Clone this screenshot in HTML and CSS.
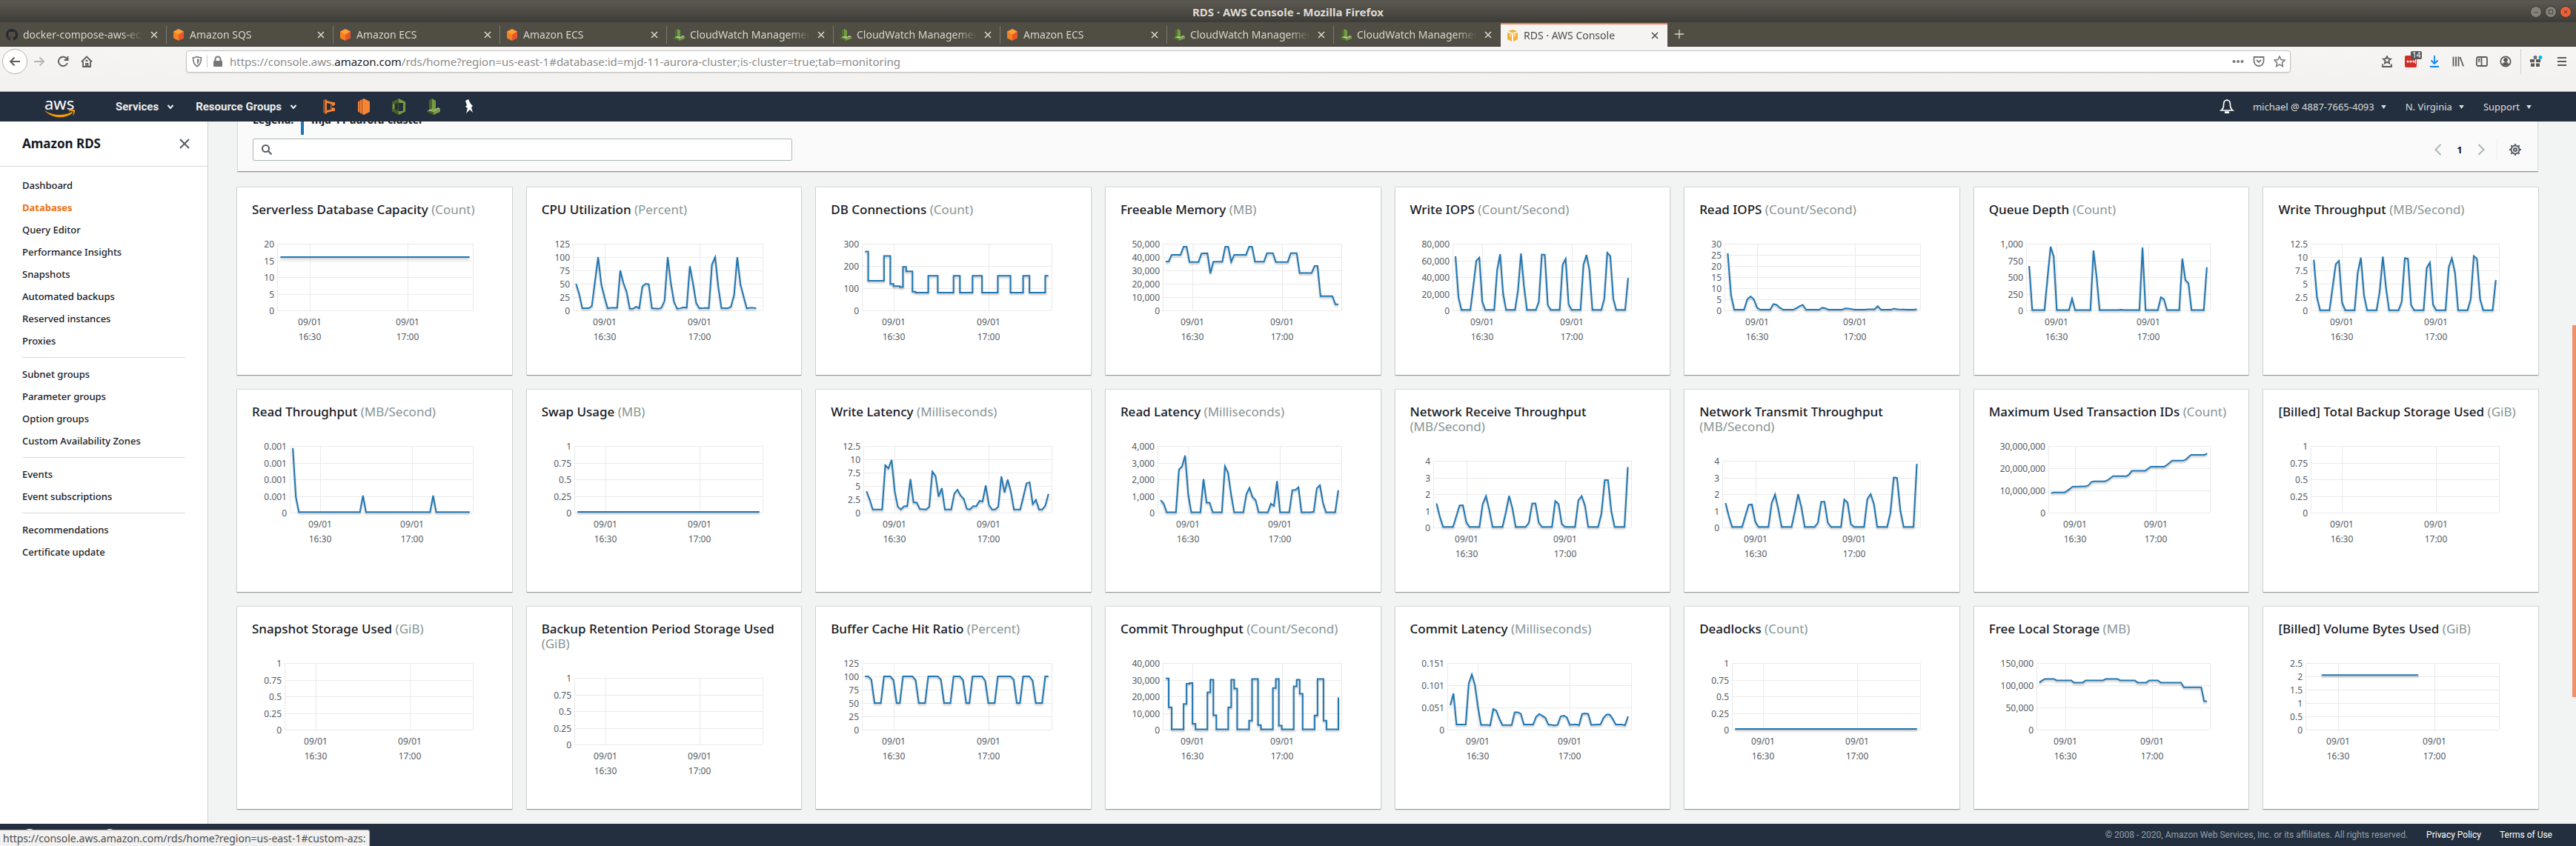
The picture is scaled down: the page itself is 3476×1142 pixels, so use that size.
FILE: index.html
```html
<!DOCTYPE html>
<html lang="en">
<head>
<meta charset="utf-8">
<title>RDS · AWS Console</title>
<link rel="stylesheet" href="styles.css">
</head>
<body>

<svg class="sprite" aria-hidden="true">
  <symbol id="i-close" viewBox="0 0 12 12"><path d="M2 2l8 8M10 2l-8 8" fill="none" stroke="currentColor" stroke-width="1.6"/></symbol>
  <symbol id="i-github" viewBox="0 0 16 16"><path fill="#24292e" fill-rule="evenodd" d="M8 0C3.58 0 0 3.58 0 8c0 3.54 2.29 6.53 5.47 7.59.4.07.55-.17.55-.38 0-.19-.01-.82-.01-1.49-2.01.37-2.53-.49-2.69-.94-.09-.23-.48-.94-.82-1.13-.28-.15-.68-.52-.01-.53.63-.01 1.08.58 1.23.82.72 1.21 1.87.87 2.33.66.07-.52.28-.87.51-1.07-1.78-.2-3.64-.89-3.64-3.95 0-.87.31-1.59.82-2.15-.08-.2-.36-1.02.08-2.12 0 0 .67-.21 2.2.82a7.6 7.6 0 014 0c1.53-1.04 2.2-.82 2.2-.82.44 1.1.16 1.92.08 2.12.51.56.82 1.27.82 2.15 0 3.07-1.87 3.75-3.65 3.95.29.25.54.73.54 1.48 0 1.07-.01 1.93-.01 2.2 0 .21.15.46.55.38A8.01 8.01 0 0016 8c0-4.42-3.58-8-8-8z"/></symbol>
  <symbol id="i-cube" viewBox="0 0 16 16"><path fill="#f58220" d="M1 3.500l7 2V16l-7-3.500z"/><path fill="#e8562a" d="M15 3.500l-7 2V16l7-3.500z"/><path fill="#ffa033" d="M8 0l7 3.500-7 4-7-4z"/></symbol>
  <symbol id="i-watch" viewBox="0 0 16 16"><path fill="#4c722c" d="M3 2l3-2v12l-3 1z"/><path fill="#759c3e" d="M6 0l4 2v9l-4 1z"/><path fill="#4c722c" d="M0 11l8 2v3l-8-3z"/><path fill="#759c3e" d="M8 13l8-3v3l-8 3z"/><path fill="#b7ca9d" d="M2 11l5-1L10 11l3-2 3 1-8 3z"/></symbol>
  <symbol id="i-rds" viewBox="0 0 16 16"><path fill="#f2b134" d="M1 4l6 2v10l-6-3zM15 4L9 6v10l6-3zM2 2l6-2 6 2-6 2.500z"/><path fill="#fbe5b5" d="M1 3l7 2 7-2v1l-7 2-7-2zM4 6l2 .5v3L4 9zM10 6.500L12 6v3l-2 .5z"/></symbol>
  <symbol id="i-caret" viewBox="0 0 10 8"><path d="M1.500 2L5 6l3.500-4" fill="none" stroke="currentColor" stroke-width="2"/></symbol>
  <symbol id="i-tri" viewBox="0 0 8 6"><path d="M0 0h8L4 6z" fill="currentColor"/></symbol>
</svg>

<header class="titlebar">
  <h1 class="titlebar-text">RDS · AWS Console - Mozilla Firefox</h1>
  <div class="window-controls">
    <button class="win-btn" aria-label="Minimize"><svg viewBox="0 0 16 16"><path d="M5 8.500h6"/></svg></button>
    <button class="win-btn" aria-label="Maximize"><svg viewBox="0 0 16 16"><path d="M5 5h6v6H5z"/></svg></button>
    <button class="win-btn win-close" aria-label="Close"><svg viewBox="0 0 16 16"><path d="M5.500 5.500l5 5M10.500 5.500l-5 5"/></svg></button>
  </div>
</header>

<nav class="tabs" aria-label="Browser tabs">
  <div class="tab"><svg class="fav"><use href="#i-github"/></svg><span class="tab-label">docker-compose-aws-ecs</span><button class="tab-x" aria-label="Close tab"><svg><use href="#i-close"/></svg></button></div>
  <div class="tab"><svg class="fav"><use href="#i-cube"/></svg><span class="tab-label">Amazon SQS</span><button class="tab-x" aria-label="Close tab"><svg><use href="#i-close"/></svg></button></div>
  <div class="tab"><svg class="fav"><use href="#i-cube"/></svg><span class="tab-label">Amazon ECS</span><button class="tab-x" aria-label="Close tab"><svg><use href="#i-close"/></svg></button></div>
  <div class="tab"><svg class="fav"><use href="#i-cube"/></svg><span class="tab-label">Amazon ECS</span><button class="tab-x" aria-label="Close tab"><svg><use href="#i-close"/></svg></button></div>
  <div class="tab"><svg class="fav"><use href="#i-watch"/></svg><span class="tab-label">CloudWatch Management</span><button class="tab-x" aria-label="Close tab"><svg><use href="#i-close"/></svg></button></div>
  <div class="tab"><svg class="fav"><use href="#i-watch"/></svg><span class="tab-label">CloudWatch Management</span><button class="tab-x" aria-label="Close tab"><svg><use href="#i-close"/></svg></button></div>
  <div class="tab"><svg class="fav"><use href="#i-cube"/></svg><span class="tab-label">Amazon ECS</span><button class="tab-x" aria-label="Close tab"><svg><use href="#i-close"/></svg></button></div>
  <div class="tab"><svg class="fav"><use href="#i-watch"/></svg><span class="tab-label">CloudWatch Management</span><button class="tab-x" aria-label="Close tab"><svg><use href="#i-close"/></svg></button></div>
  <div class="tab tab-last"><svg class="fav"><use href="#i-watch"/></svg><span class="tab-label">CloudWatch Management</span><button class="tab-x" aria-label="Close tab"><svg><use href="#i-close"/></svg></button></div>
  <div class="tab tab-active"><svg class="fav"><use href="#i-rds"/></svg><span class="tab-label">RDS · AWS Console</span><button class="tab-x" aria-label="Close tab"><svg><use href="#i-close"/></svg></button></div>
  <button class="tab-new" aria-label="New tab"><svg viewBox="0 0 16 16"><path d="M8 1v14M1 8h14" fill="none" stroke="currentColor" stroke-width="1.500"/></svg></button>
</nav>

<div class="toolbar">
  <div class="nav-buttons">
    <button class="tb back" aria-label="Back"><svg viewBox="0 0 16 16"><path d="M15 8H2M7.500 2.500L2 8l5.500 5.500"/></svg></button>
    <button class="tb fwd" aria-label="Forward"><svg viewBox="0 0 16 16"><path d="M1 8h13M8.500 2.500L14 8l-5.500 5.500"/></svg></button>
    <button class="tb" aria-label="Reload"><svg viewBox="0 0 16 16"><path d="M14 10a6.200 6.200 0 1 1-1.500-6.500L14 5M14.500 1v5h-5"/></svg></button>
    <button class="tb" aria-label="Home"><svg viewBox="0 0 16 16"><path d="M1 8.500L8 1.500l7 7M3 8v7h10V8M7 15v-4h2.500v4M6.500 7h3"/></svg></button>
  </div>
  <div class="urlbar">
    <svg class="u-shield" viewBox="0 0 16 16"><path d="M8 1.500c2 1 4 1.300 5.500 1.300 0 6-1 9.500-5.500 12C3.500 12.300 2.500 8.800 2.500 2.800 4 2.800 6 2.500 8 1.500z" fill="none" stroke="#777" stroke-width="1.600"/><path d="M8 4.500v7.500c2-1.600 2.700-4 2.800-7z" fill="#777"/></svg>
    <svg class="u-lock" viewBox="0 0 16 16"><path d="M4.500 7V5a3.500 3.500 0 0 1 7 0v2" fill="none" stroke="#777" stroke-width="2"/><rect x="2" y="7" width="12" height="8" rx="1" fill="#777"/></svg>
    <div class="url" role="textbox" aria-label="Address">https://console.aws.<b>amazon.com</b>/rds/home?region=us-east-1#database:id=mjd-11-aurora-cluster;is-cluster=true;tab=monitoring</div>
    <button class="ub" aria-label="Page actions"><svg viewBox="0 0 16 16"><g fill="#777"><circle cx="2.500" cy="8" r="2"/><circle cx="8" cy="8" r="2"/><circle cx="13.500" cy="8" r="2"/></g></svg></button>
    <button class="ub" aria-label="Save to Pocket"><svg viewBox="0 0 16 16"><path d="M1.500 2h13v5.500a6.500 6.500 0 0 1-13 0zM5 6l3 3 3-3" fill="none" stroke="#777" stroke-width="1.800"/></svg></button>
    <button class="ub" aria-label="Bookmark this page"><svg viewBox="0 0 16 16"><path d="M8 1l2.100 4.600 4.900.6-3.600 3.400.9 4.900L8 12.100l-4.300 2.400.9-4.900L1 6.200l4.900-.6z" fill="none" stroke="#777" stroke-width="1.500"/></svg></button>
  </div>
  <div class="tools">
    <button class="tb" aria-label="Bookmarks"><svg viewBox="0 0 16 16"><path d="M8 1l1.500 3.200 3.500.4-2.600 2.400.7 3.500L8 8.800l-3.100 1.700.7-3.500L3 4.600l3.500-.4zM2 11.500V15h12v-3.500"/></svg></button>
    <button class="tb pass" aria-label="Password manager"><svg viewBox="0 0 16 16"><rect width="16" height="16" rx="2" fill="#d32d27" stroke="none"/><g fill="#fff" stroke="none"><circle cx="4" cy="8" r="1.500"/><circle cx="8" cy="8" r="1.500"/><circle cx="12" cy="8" r="1.500"/><path d="M14 5h1v6h-1z"/></g></svg><span class="badge">14</span></button>
    <button class="tb dl" aria-label="Downloads"><svg viewBox="0 0 16 16"><path d="M8 0v11M3.500 6.500L8 11l4.500-4.500M2 15h12"/></svg></button>
    <button class="tb" aria-label="Library"><svg viewBox="0 0 16 16"><path d="M1.500 1.500v13M5 1.500v13M8.500 1.500v13M10.500 2l4.500 12.500"/></svg></button>
    <button class="tb" aria-label="Sidebar"><svg viewBox="0 0 16 16"><rect x="1" y="2" width="14" height="12" rx="2"/><path d="M7.500 2v12M3 5h2.500M3 7.500h2.500"/></svg></button>
    <button class="tb" aria-label="Account"><svg viewBox="0 0 16 16"><circle cx="8" cy="8" r="6.700"/><circle cx="8" cy="6" r="2" fill="currentColor"/><path d="M4.500 11.500c1-2 6-2 7 0-1.500 2-5.500 2-7 0z" fill="currentColor"/></svg></button>
    <button class="tb gift" aria-label="What's new"><svg viewBox="0 0 18 16"><path d="M1 5h6v4H1zM9 5h6v4H9zM2 10.500h5V15H2zM9 10.500h5V15H9z" fill="currentColor" stroke="none"/><circle cx="8" cy="2.500" r="1.500"/><circle cx="15" cy="2.500" r="2.500" fill="#00b3f4" stroke="none"/></svg></button>
    <button class="tb" aria-label="Menu"><svg viewBox="0 0 16 16"><path d="M2 3h12M2 8h12M2 13h12"/></svg></button>
  </div>
</div>

<div class="awsnav">
  <a class="aws-logo" href="#home" aria-label="AWS home"><span class="aws-word">aws</span><svg viewBox="0 0 42 12"><path d="M0 1c11 7.500 26 8 37 2l1 1.500C28 13 10 12.500 0 1z" fill="#f90"/><path d="M33 1.200c3-1.600 7-1.500 7.800-.6.800 1-.3 5.500-2.800 8 .6-2.200 1.600-5 .9-5.900-.7-.9-3.500-.7-5.900-.3z" fill="#f90"/></svg></a>
  <button class="menu">Services<svg><use href="#i-caret"/></svg></button>
  <button class="menu">Resource Groups<svg><use href="#i-caret"/></svg></button>
  <div class="shortcuts">
    <a href="#ecr" aria-label="Container Registry"><svg viewBox="0 0 24 24"><path fill="#9d5025" d="M4 3l3-1v20l-3-2z"/><path fill="#f58534" d="M7 2l2 1v18l-2 1zM9 4l10 2.500v4L15 11v2l4 .5v4L9 20v-3l5-1v-8L9 7z"/><path fill="#9d5025" d="M14 8l2 .5V11l-2 1zM14 13l2 1v1.500l-2 .5z"/><path fill="#f58534" d="M17 6h3v4h-3zM17 14h3v4h-3z"/></svg></a>
    <a href="#ec2" aria-label="EC2"><svg viewBox="0 0 24 24"><path fill="#9d5025" d="M4 5l8-4v22l-8-4z"/><path fill="#f58534" d="M4 5.500l2-1v15l-2-1zM7 3.500l2-1v19l-2-1zM10 2l2-1 8 4v14l-8 4-2-1z"/></svg></a>
    <a href="#vpc" aria-label="VPC"><svg viewBox="0 0 24 24"><path fill="#4b612c" d="M12 1L3 5.500v13L12 23z"/><path fill="#759c3e" d="M12 1l9 4.500v13L12 23v-5h5l1-1V7h-5l-1-1z"/><path fill="#232f3e" d="M7 8l4-1v10l-4-1zM13 7l4 1v8l-4 1z"/><path fill="#759c3e" d="M4 9l2-1v8l-2-1z"/></svg></a>
    <a href="#cloudwatch" aria-label="CloudWatch"><svg viewBox="0 0 24 24"><path fill="#4b612c" d="M6 3l4-2v16l-4 1z"/><path fill="#759c3e" d="M10 1l5 3v12l-5 1z"/><path fill="#4b612c" d="M3 17l9 2v4l-9-4z"/><path fill="#759c3e" d="M12 19l9-4v4l-9 4z"/><path fill="#b7ca9d" d="M4 17l6-2 4 1 4-3 3 2-9 4z"/><path fill="#759c3e" d="M7 16.500l4-1 3 1.300 3.500-2 2 .8L12 18z"/></svg></a>
    <button aria-label="Pin shortcuts"><svg viewBox="0 0 24 24"><path fill="#fff" d="M8 4l4-2 3 6 3 3-2 2 2 7-4-4-5 5 2-7-3-2 2-2z"/></svg></button>
  </div>
  <div class="account">
    <button class="bell" aria-label="Notifications"><svg viewBox="0 0 20 20"><path d="M10 2c-3 0-4 2.500-4 5 0 4-1 6-3 7.500h14C15 13 14 11 14 7c0-2.500-1-5-4-5zM8 16.500h4v1H8zM10 2V1" fill="none" stroke="#fff" stroke-width="1.500"/></svg></button>
    <button class="acct">michael @ 4887-7665-4093<svg><use href="#i-tri"/></svg></button>
    <button class="acct">N. Virginia<svg><use href="#i-tri"/></svg></button>
    <button class="acct">Support<svg><use href="#i-tri"/></svg></button>
  </div>
</div>

<div class="page">
  <aside class="side">
    <div class="side-head"><h2>Amazon RDS</h2><button aria-label="Close navigation"><svg viewBox="0 0 14 14"><path d="M1 1l12 12M13 1L1 13" fill="none" stroke="#545b64" stroke-width="2"/></svg></button></div>
    <nav class="side-nav" aria-label="RDS">
      <ul><li><a href="#dashboard">Dashboard</a></li><li><a class="current" href="#databases">Databases</a></li><li><a href="#query">Query Editor</a></li><li><a href="#insights">Performance Insights</a></li><li><a href="#snapshots">Snapshots</a></li><li><a href="#backups">Automated backups</a></li><li><a href="#reserved">Reserved instances</a></li><li><a href="#proxies">Proxies</a></li></ul>
      <ul><li><a href="#subnets">Subnet groups</a></li><li><a href="#parameters">Parameter groups</a></li><li><a href="#options">Option groups</a></li><li><a href="#custom-azs">Custom Availability Zones</a></li></ul>
      <ul><li><a href="#events">Events</a></li><li><a href="#subscriptions">Event subscriptions</a></li></ul>
      <ul><li><a href="#recommendations">Recommendations</a></li><li><a href="#certificate">Certificate update</a></li></ul>
    </nav>
  </aside>

  <main class="main">
    <section class="panel">
      <div class="legend"><strong>Legend:</strong><span class="swatch"></span><strong>mjd-11-aurora-cluster</strong></div>
      <div class="panel-row">
        <label class="search"><svg viewBox="0 0 16 16"><circle cx="6.500" cy="6.500" r="4.500"/><path d="M10 10l4.500 4.500"/></svg><input type="text" aria-label="Filter metrics"></label>
        <div class="pager">
          <button aria-label="Previous page"><svg viewBox="0 0 16 16"><path d="M11.500 1l-7 7 7 7"/></svg></button>
          <span class="page-no">1</span>
          <button aria-label="Next page"><svg viewBox="0 0 16 16"><path d="M4.500 1l7 7-7 7"/></svg></button>
          <button class="gear" aria-label="Preferences"><svg viewBox="0 0 16 16"><circle cx="8" cy="8" r="5.500"/><circle cx="8" cy="8" r="2"/><path d="M8 0v2.500M8 13.500V16M0 8h2.500M13.500 8H16M2.300 2.300l1.800 1.800M11.900 11.900l1.800 1.800M13.700 2.300l-1.800 1.800M4.100 11.900l-1.800 1.800"/></svg></button>
        </div>
      </div>
    </section>

    <section class="cards">
      <article class="card"><h3>Serverless Database Capacity <span>(Count)</span></h3><svg class="chart" data-left="34" data-ticks="0 5 10 15 20" data-max="20" data-points="1,16 59,16"></svg></article>
      <article class="card"><h3>CPU Utilization <span>(Percent)</span></h3><svg class="chart" data-left="42" data-ticks="0 25 50 75 100 125" data-max="125" data-points="1,50 2,31 3,4 5,4 6,8 7,54 8,100 9,49 10,25 11,4 12,5 14,5 15,75 16,51 17,35 18,3 19,3 20,7 21,4 22,45 23,50 24,49 25,4 27,3 28,5 29,18 30,100 31,51 32,16 33,3 34,4 35,6 36,5 37,83 38,51 39,14 40,4 41,4 42,5 43,4 44,86 45,100 46,44 47,4 49,4 50,7 51,29 52,100 53,49 54,26 55,4 56,5 57,5 58,4"></svg></article>
      <article class="card"><h3>DB Connections <span>(Count)</span></h3><svg class="chart" data-left="42" data-step data-ticks="0 100 200 300" data-max="300" data-points="1,265 2,133 7,245 9,119 10,109 12,105 13,196 14,176 16,84 17,80 21,156 24,80 29,156 31,80 35,156 38,80 43,156 47,80 51,156 53,80 58,156 59,156"></svg></article>
      <article class="card"><h3>Freeable Memory <span>(MB)</span></h3><svg class="chart" data-left="57" data-ticks="0 10,000 20,000 30,000 40,000 50,000" data-max="50" data-points="1,36.7 2,36.7 3,41.7 6,41.7 7,47.8 8,47.8 9,36.3 12,36.3 13,42.7 15,42.9 16,27.8 17,36.5 20,36.5 21,47.8 22,47.8 23,36.5 24,41.7 28,41.7 29,47.8 30,47.8 31,36.5 34,36.5 35,42.9 37,42.9 38,36.3 42,36.3 43,42.9 45,42.9 46,28 50,28 51,33.3 52,33.3 53,10.7 57,10.7 58,4.6 59,4.6"></svg></article>
      <article class="card"><h3>Write IOPS <span>(Count/Second)</span></h3><svg class="chart" data-left="57" data-ticks="0 20,000 40,000 60,000 80,000" data-max="80" data-points="1,65 2,16 3,.6 6,.6 7,29.5 8,59.7 9,63.5 10,10.5 11,.6 14,.6 15,48.6 16,67.6 17,20 18,.6 21,.6 22,24 23,68.3 24,29.5 25,.6 28,.6 29,10.5 30,67 31,66.7 32,6.7 33,.6 36,.6 37,55 38,62 39,7.3 40,.6 43,.6 44,55 45,66.7 46,48.6 47,.6 50,.6 51,14.3 52,69.2 53,65.4 54,14.3 55,.6 58,.6 59,39"></svg></article>
      <article class="card"><h3>Read IOPS <span>(Count/Second)</span></h3><svg class="chart" data-left="34" data-ticks="0 5 10 15 20 25 30" data-max="30" data-points="1,25.7 2,6.9 3,.3 6,.3 7,5 8,6.3 9,5 10,1.2 11,.3 14,.3 15,2.9 16,2.5 17,1.2 18,.3 21,.3 22,1 23,1.9 24,2.5 25,.3 29,.3 30,1.2 31,.9 32,.3 36,.3 37,.9 38,.8 40,.3 43,.3 44,.5 46,.5 47,1.9 48,.3 51,.3 52,.8 53,.5 55,.4 56,.3 58,.3 59,.5"></svg></article>
      <article class="card"><h3>Queue Depth <span>(Count)</span></h3><svg class="chart" data-left="50" data-ticks="0 250 500 750 1,000" data-max="1000" data-points="1,667 2,5 6,5 7,490 8,956 9,813 10,5 14,5 15,179 16,5 21,5 22,900 23,508 24,5 30,5 31,12 32,5 37,5 38,944 39,5 43,5 44,198 45,167 46,5 50,5 51,778 52,456 53,409 54,5 58,5 59,647"></svg></article>
      <article class="card"><h3>Write Throughput <span>(MB/Second)</span></h3><svg class="chart" data-left="44" data-ticks="0 2.5 5 7.5 10 12.5" data-max="12.5" data-points="1,9.5 2,2.5 3,.05 6,.05 7,4.4 8,8.7 9,9.3 10,1.5 11,.05 14,.05 15,7.1 16,9.9 17,2.8 18,.05 21,.05 22,3.6 23,10.1 24,4.3 25,.05 28,.05 29,1.6 30,9.8 31,9.7 32,1 33,.05 36,.05 37,8 38,9 39,1.1 40,.05 43,.05 44,8.1 45,9.8 46,7.1 47,.05 50,.05 51,2.1 52,10.2 53,9.7 54,2.1 55,.05 58,.05 59,5.7"></svg></article>

      <article class="card"><h3>Read Throughput <span>(MB/Second)</span></h3><svg class="chart" data-left="51" data-ticks="0 0.001 0.001 0.001 0.001" data-max="4" data-points="1,3.88 2,.95 3,.03 23,.03 24,1.02 25,.03 46,.03 47,1.02 48,.03 59,.03"></svg></article>
      <article class="card"><h3>Swap Usage <span>(MB)</span></h3><svg class="chart" data-left="44" data-ticks="0 0.25 0.5 0.75 1" data-max="1" data-points="1,.01 59,.01"></svg></article>
      <article class="card"><h3>Write Latency <span>(Milliseconds)</span></h3><svg class="chart" data-left="44" data-ticks="0 2.5 5 7.5 10 12.5" data-max="12.5" data-points="1,4 2,2.5 3,.6 6,.6 7,8.9 8,8.3 9,9.9 10,4 11,1.1 12,.6 13,1.2 14,1.2 15,6.3 16,1.9 17,1.9 18,.7 20,.6 21,1.1 22,7.7 23,6.9 24,3 25,4.6 26,.6 28,.6 29,3.6 30,4.3 31,3.2 32,2.6 33,.7 34,.6 35,1.2 36,1.2 37,2.2 38,2.1 39,5.1 40,1.5 41,.6 42,.6 43,1.1 44,6.8 45,3.8 46,6.2 47,4 48,.6 50,.6 51,3 52,5.5 53,5.7 54,1.6 55,2.4 56,.6 57,.6 58,1.3 59,3.5"></svg></article>
      <article class="card"><h3>Read Latency <span>(Milliseconds)</span></h3><svg class="chart" data-left="50" data-ticks="0 1,000 2,000 3,000 4,000" data-max="4000" data-points="1,750 2,540 3,20 6,20 7,2590 8,2780 9,3430 10,1110 11,20 14,20 15,2020 16,600 17,600 18,20 21,20 22,2790 23,2410 24,1110 25,20 28,20 29,1110 30,1490 31,940 32,750 33,20 36,20 37,540 38,410 39,1900 40,20 43,20 44,1350 45,1365 46,1520 47,20 50,20 51,60 52,1460 53,1650 54,600 55,20 58,20 59,1350"></svg></article>
      <article class="card"><h3>Network Receive Throughput <span>(MB/Second)</span></h3><svg class="chart" data-left="31" data-ticks="0 1 2 3 4" data-max="4" data-points="1,1.44 2,.65 3,.03 6,.03 7,.68 8,1.32 9,1.33 10,.33 11,.03 14,.03 15,1.41 16,1.89 17,1.05 18,.03 21,.03 22,.9 23,1.9 24,1.16 25,.03 28,.03 29,.28 30,1.44 31,1.44 32,.28 33,.03 36,.03 37,1.59 38,1.41 39,.2 40,.03 43,.03 44,1.63 45,1.89 46,1.33 47,.03 50,.03 51,.84 52,2.84 53,2.84 54,.97 55,.03 58,.03 59,3.63"></svg></article>
      <article class="card"><h3>Network Transmit Throughput <span>(MB/Second)</span></h3><svg class="chart" data-left="31" data-ticks="0 1 2 3 4" data-max="4" data-points="1,1.47 2,.68 3,.03 6,.03 7,.7 8,1.36 9,1.38 10,.35 11,.03 14,.03 15,1.48 16,1.98 17,1.1 18,.03 21,.03 22,.95 23,2 24,1.22 25,.03 28,.03 29,.28 30,1.54 31,1.54 32,.28 33,.03 36,.03 37,1.68 38,1.5 39,.2 40,.03 43,.03 44,1.72 45,2 46,1.4 47,.03 50,.03 51,.9 52,3 53,2.97 54,1.02 55,.03 58,.03 59,3.82"></svg></article>
      <article class="card"><h3>Maximum Used Transaction IDs <span>(Count)</span></h3><svg class="chart" data-left="80" data-ticks="0 10,000,000 20,000,000 30,000,000" data-max="30" data-points="1,8.8 2,9.1 6,9.1 7,9.8 9,11.7 14,11.8 15,12.4 16,13.8 17,14.1 21,14.1 22,14.6 24,16.4 29,16.4 30,17.2 31,18.8 36,18.8 38,20.7 43,20.7 44,21.4 46,23.4 50,23.4 51,23.9 53,26 58,26 59,26.6"></svg></article>
      <article class="card"><h3>[Billed] Total Backup Storage Used <span>(GiB)</span></h3><svg class="chart" data-left="44" data-ticks="0 0.25 0.5 0.75 1" data-max="1" data-points=""></svg></article>

      <article class="card"><h3>Snapshot Storage Used <span>(GiB)</span></h3><svg class="chart" data-left="44" data-ticks="0 0.25 0.5 0.75 1" data-max="1" data-points=""></svg></article>
      <article class="card"><h3>Backup Retention Period Storage Used <span>(GiB)</span></h3><svg class="chart" data-left="44" data-ticks="0 0.25 0.5 0.75 1" data-max="1" data-points=""></svg></article>
      <article class="card"><h3>Buffer Cache Hit Ratio <span>(Percent)</span></h3><svg class="chart" data-left="42" data-ticks="0 25 50 75 100 125" data-max="125" data-points="1,100 2,100 3,94 4,50 6,50 7,100 9,100 10,93 11,50 12,50 13,100 16,100 17,93 18,50 20,50 21,100 24,100 25,94 26,50 28,50 29,100 31,100 32,93 33,50 34,50 35,100 38,100 39,92 40,50 42,50 43,100 47,100 48,94 49,50 50,50 51,100 53,100 54,92 55,50 57,50 58,100 59,100"></svg></article>
      <article class="card"><h3>Commit Throughput <span>(Count/Second)</span></h3><svg class="chart" data-left="57" data-step data-ticks="0 10,000 20,000 30,000 40,000" data-max="40" data-points="1,30.8 2,13.5 3,.2 7,15.4 8,27.6 9,28 10,3.6 11,.2 15,22.5 16,30 17,8.7 18,.2 22,13.5 23,30 24,24.7 25,.2 29,5.5 30,30.4 32,2.8 33,.2 37,25 38,30.4 39,2.4 40,.2 44,26 45,30 46,21.6 47,.2 51,8.6 52,30.4 54,5.5 55,.2 59,19.3"></svg></article>
      <article class="card"><h3>Commit Latency <span>(Milliseconds)</span></h3><svg class="chart" data-left="50" data-ticks="0 0.051 0.101 0.151" data-max="3" data-points="1,1.11 2,1.63 3,.23 6,.23 7,2.08 8,2.49 9,2.02 10,1.02 11,.22 13,.22 14,.2 15,.93 16,.86 17,.5 18,.21 21,.21 22,.78 23,.78 24,.72 25,.23 28,.23 29,.58 30,.71 31,.63 32,.54 33,.23 34,.22 35,.19 36,.22 37,.6 38,.63 39,.56 40,.22 42,.24 43,.2 44,.71 45,.73 46,.71 47,.22 50,.24 51,.54 52,.68 53,.68 54,.49 55,.23 57,.23 58,.2 59,.6"></svg></article>
      <article class="card"><h3>Deadlocks <span>(Count)</span></h3><svg class="chart" data-left="44" data-ticks="0 0.25 0.5 0.75 1" data-max="1" data-points="1,.01 59,.01"></svg></article>
      <article class="card"><h3>Free Local Storage <span>(MB)</span></h3><svg class="chart" data-left="64" data-ticks="0 50,000 100,000 150,000" data-max="150" data-points="1,106 2,111 3,114 6,114 7,111 12,111 13,106 16,106 17,111 23,111 24,114 28,114 29,111 34,111 35,106 38,106 39,111 42,111 43,106 50,106 51,95.5 57,95.5 58,64 59,64"></svg></article>
      <article class="card"><h3>[Billed] Volume Bytes Used <span>(GiB)</span></h3><svg class="chart" data-left="37" data-ticks="0 0.5 1 1.5 2 2.5" data-max="2.5" data-points="5,2.05 35,2.05"></svg></article>
    </section>
  </main>
  <div class="scroll-thumb"></div>
</div>

<footer class="footer">
  <div class="foot-tools">
    <button aria-label="Feedback"><svg viewBox="0 0 16 16"><path d="M8 0c5 0 8 2.500 8 6s-3 6-8 6l-4 4v-5C1.500 10 0 8 0 6c0-3.500 3-6 8-6z" fill="#fff"/></svg></button>
    <button aria-label="Language"><svg viewBox="0 0 16 16"><circle cx="8" cy="8" r="8" fill="#fff"/></svg></button>
  </div>
  <span class="copy">© 2008 - 2020, Amazon Web Services, Inc. or its affiliates. All rights reserved.</span>
  <a href="#privacy">Privacy Policy</a>
  <a href="#terms">Terms of Use</a>
  <div class="status">https://console.aws.amazon.com/rds/home?region=us-east-1#custom-azs:</div>
</footer>

<script src="charts.js"></script>
</body>
</html>
```
FILE: styles.css
```css
* { box-sizing: border-box; }
body {
  margin: 0;
  height: 100vh;
  display: flex;
  flex-direction: column;
  overflow: hidden;
  font-family: "Noto Sans", sans-serif;
  font-size: 14px;
  color: #16191f;
  background: #f2f3f3;
}
button {
  margin: 0;
  padding: 0;
  border: 0;
  background: none;
  font: inherit;
  color: inherit;
  display: flex;
  align-items: center;
  justify-content: center;
}
a { color: inherit; text-decoration: none; }
h1, h2, h3, ul { margin: 0; padding: 0; list-style: none; }
.sprite { position: absolute; width: 0; height: 0; }

/* window title */
.titlebar {
  flex: none;
  display: grid;
  grid-template-columns: 1fr auto 1fr;
  align-items: center;
  height: 30px;
  padding: 0 6px;
  background: linear-gradient(#5c5951, #3d3c37);
  border-top: 1px solid #55534b;
}
.titlebar-text { grid-column: 2; font-size: 15px; line-height: 20px; font-weight: 700; color: #dfdbd2; }
.window-controls { display: flex; gap: 4px; justify-content: flex-end; }
.win-btn { width: 16px; height: 16px; border-radius: 50%; background: #85827a; border: 1px solid #3a3934; }
.win-btn svg { width: 16px; height: 16px; fill: none; stroke: #3a3934; stroke-width: 1; }
.win-close { background: #ee6035; }

/* tab strip */
.tabs { flex: none; display: flex; height: 33px; background: #504d45; border-bottom: 1px solid #35342f; color: #d9d5cb; }
.tab { flex: 0 1 225px; min-width: 0; display: flex; align-items: center; gap: 7px; padding: 0 9px 0 8px; height: 33px; background: linear-gradient(#7c7971, #7c7971) right 5px / 1px 24px no-repeat; }
.tab-last { background: none; }
.tab-active { background: #f5f4f2; border-top: 2px solid #ef7f51; margin-top: 1px; height: 32px; color: #4c4c4c; }
.fav { flex: none; width: 16px; height: 16px; }
.tab-label { flex: 1; overflow: hidden; white-space: nowrap; line-height: 20px; mask-image: linear-gradient(to right, #000 calc(100% - 28px), transparent); }
.tab-x { flex: none; width: 16px; height: 16px; }
.tab-x svg { width: 12px; height: 12px; }
.tab-new { width: 32px; }
.tab-new svg { width: 14px; height: 14px; }

/* navigation toolbar */
.toolbar { flex: none; display: flex; align-items: flex-start; height: 61px; padding: 3px 3px 0; background: linear-gradient(#f6f5f3, #f2f1ef); border-bottom: 1px solid #b9b8b6; color: #5b5b5b; }
.tb { width: 32px; height: 34px; }
.tb svg { width: 16px; height: 16px; fill: none; stroke: currentColor; stroke-width: 1.8; }
.nav-buttons { display: flex; width: 248px; }
.nav-buttons .back { width: 34px; border: 1px solid #b5b4b2; border-radius: 50%; background: #fff; }
.nav-buttons .fwd { color: #b5b4b2; }
.urlbar { flex: 1; display: flex; align-items: center; height: 30px; margin-top: 2px; padding: 0 6px; border: 1px solid #c2c1bf; border-radius: 4px; background: #fff; box-shadow: 0 1px 2px #00000018; }
.urlbar svg { flex: none; width: 16px; height: 16px; }
.u-lock { margin: 0 8px 0 12px; box-shadow: -6px 0 #fff, -7px 0 #ccc; }
.url { flex: 1; font-size: 15px; line-height: 20px; color: #8b8b8b; white-space: nowrap; overflow: hidden; }
.url b { font-weight: 400; color: #222; }
.ub { width: 28px; }
.ub:last-child { width: 16px; margin-left: 6px; }
.tools { display: flex; width: 382px; justify-content: flex-end; }
.pass { position: relative; }
.badge { position: absolute; left: 16px; top: 3px; padding: 0 2px; border-radius: 2px; background: #55585c; color: #fff; font-size: 10px; line-height: 11px; }
.dl { color: #0a84ff; }
.tools .gift { margin-left: 4px; width: 40px; border-left: 1px solid #d0cfcd; }
.gift svg { width: 18px; }

/* AWS console header */
.awsnav { flex: none; display: flex; align-items: center; height: 40px; padding: 0 60px; background: #232f3e; color: #fff; font-family: Roboto, sans-serif; z-index: 1; }
.aws-logo { width: 42px; margin-right: 54px; display: flex; flex-direction: column; }
.aws-word { font-family: "Noto Sans", sans-serif; font-size: 22px; line-height: 20px; height: 19px; }
.aws-logo svg { width: 42px; height: 12px; }
.menu { gap: 11px; margin-right: 29px; font-size: 15px; font-weight: 700; line-height: 20px; color: #eee; }
.menu svg { width: 10px; height: 8px; }
.shortcuts { display: flex; gap: 23px; margin-left: 2px; }
.shortcuts svg { width: 24px; height: 24px; }
.shortcuts a { display: flex; }
.account { display: flex; align-items: center; gap: 26px; margin-left: auto; }
.bell { margin-right: -2px; }
.bell svg { width: 22px; height: 22px; }
.acct { gap: 9px; font-family: "Noto Sans", sans-serif; font-size: 13px; line-height: 20px; color: #ddd; }
.acct svg { width: 7px; height: 5px; }

/* page body */
.page { position: relative; flex: 1; min-height: 0; display: flex; overflow: hidden; }
.side { flex: 0 0 281px; background: #fff; border-right: 1px solid #c9d0d0; }
.side-head { display: flex; align-items: center; justify-content: space-between; height: 61px; padding: 0 24px 0 30px; border-bottom: 1px solid #d5dbdb; }
.side-head h2 { font-size: 17px; line-height: 24px; font-weight: 700; }
.side-head svg { width: 14px; height: 14px; }
.side-nav { padding: 10px 30px; font-size: 13px; font-weight: 500; line-height: 30px; }
.side-nav ul { border-top: 1px solid #d5dbdb; padding: 7px 0; }
.side-nav ul:first-child { border-top: 0; padding-top: 0; }
.side-nav .current { color: #ec7211; font-weight: 700; }

.main { flex: 1; min-width: 0; padding: 0 51px 0 39px; }
.panel { margin: -32px 0 0; padding: 19px 20px 14px; background: #fafafa; border: 1px solid #d5dbdb; border-bottom: 1px solid #879596; box-shadow: 0 1px 1px #0000001a; }
.legend { display: flex; gap: 10px; height: 30px; line-height: 20px; }
.swatch { width: 4px; background: #1f77b4; }
.panel-row { display: flex; justify-content: space-between; margin-top: 5px; }
.search { display: flex; align-items: center; gap: 8px; width: 728px; height: 30px; padding: 0 10px; background: #fff; border: 1px solid #aab7b8; border-radius: 2px; }
.search svg { width: 16px; height: 16px; fill: none; stroke: #545b64; stroke-width: 2; }
.search input { flex: 1; border: 0; outline: 0; background: none; font: inherit; }
.pager { display: flex; align-items: center; gap: 13px; padding-right: 2px; color: #aab7b8; }
.pager svg { width: 16px; height: 16px; fill: none; stroke: currentColor; stroke-width: 2; }
.page-no { width: 16px; text-align: center; font-weight: 700; color: #16191f; font-size: 13px; }
.gear { height: 30px; padding-left: 16px; border-left: 1px solid #eaeded; color: #545b64; }

.cards { display: grid; grid-template-columns: repeat(8, 1fr); gap: 20px; margin-top: 21px; }
.card { min-width: 0; padding: 20px; background: #fff; box-shadow: 0 1px 1px #0000004d, 0 0 1px 1px #d8dddd, 0 1px #879596; }
.card h3 { font-size: 17px; line-height: 20px; font-weight: 500; }
.card h3 span { color: #879596; font-weight: 400; white-space: nowrap; }
.chart { display: block; width: 100%; height: 193px; }
.chart text { font-size: 12px; fill: #545b64; }
.chart .y { text-anchor: end; }
.chart .x { text-anchor: middle; }
.grid { stroke: #eaeaea; stroke-width: 1; fill: none; shape-rendering: crispEdges; }
.line { stroke: #1f77b4; stroke-width: 2; fill: none; filter: drop-shadow(0 2px 1px #00000040); }

.scroll-thumb { position: absolute; right: 0; top: 29%; width: 5px; height: 53%; background: #f28f68; }

/* footer */
.footer { position: relative; flex: none; display: flex; align-items: center; height: 30px; padding: 0 32px; gap: 25px; background: #232f3e; color: #fff; font-family: Roboto, sans-serif; font-size: 12px; line-height: 20px; }
.foot-tools { display: flex; gap: 92px; margin-right: auto; }
.foot-tools svg { width: 16px; height: 16px; }
.copy { color: #95a0ab; }
.status { position: absolute; left: 0; bottom: 0; height: 22px; padding: 0 4px; background: #f2f1f0; border: 1px solid #b4b3b1; border-width: 1px 1px 0 0; border-radius: 0 3px 0 0; color: #4c4c4c; font-family: "Noto Sans", sans-serif; font-size: 14px; line-height: 21px; }
```
FILE: charts.js
```js
// Draws every metric chart: a one-hour window, one sample per minute.
const NS = "http://www.w3.org/2000/svg";
const TOP = 36, BOTTOM = 126, MINUTES = 60;

function add(svg, tag, attrs, text) {
  const el = document.createElementNS(NS, tag);
  for (const key in attrs) el.setAttribute(key, attrs[key]);
  if (text) el.textContent = text;
  svg.appendChild(el);
}

document.querySelectorAll(".chart").forEach(svg => {
  const left = Number(svg.dataset.left);
  const right = Math.round(svg.getBoundingClientRect().width) - 33;
  const max = Number(svg.dataset.max);
  const x = m => left + (right - left) * m / MINUTES;
  const y = v => BOTTOM - (BOTTOM - TOP) * v / max;

  const ticks = svg.dataset.ticks.split(" ");
  let grid = `M${left} ${TOP}V${BOTTOM}M${right} ${TOP}V${BOTTOM}`;
  ticks.forEach((label, i) => {
    const ty = Math.round(y(max * i / (ticks.length - 1)));
    grid += `M${left} ${ty}H${right}`;
    add(svg, "text", { class: "y", x: left - 4, y: ty + 5 }, label);
  });
  [[10, "16:30"], [40, "17:00"]].forEach(([m, label]) => {
    const gx = Math.round(x(m));
    grid += `M${gx} ${TOP}V${BOTTOM}`;
    add(svg, "text", { class: "x", x: gx, y: 146 }, "09/01");
    add(svg, "text", { class: "x", x: gx, y: 166 }, label);
  });
  add(svg, "path", { class: "grid", d: grid });

  if (!svg.dataset.points) return;
  const step = "step" in svg.dataset;
  const d = svg.dataset.points.split(" ").map((pair, i) => {
    const [m, v] = pair.split(",").map(Number);
    if (i === 0) return `M${x(m)} ${y(v)}`;
    return step ? `H${x(m)}V${y(v)}` : `L${x(m)} ${y(v)}`;
  }).join("");
  add(svg, "path", { class: "line", d });
});
```
